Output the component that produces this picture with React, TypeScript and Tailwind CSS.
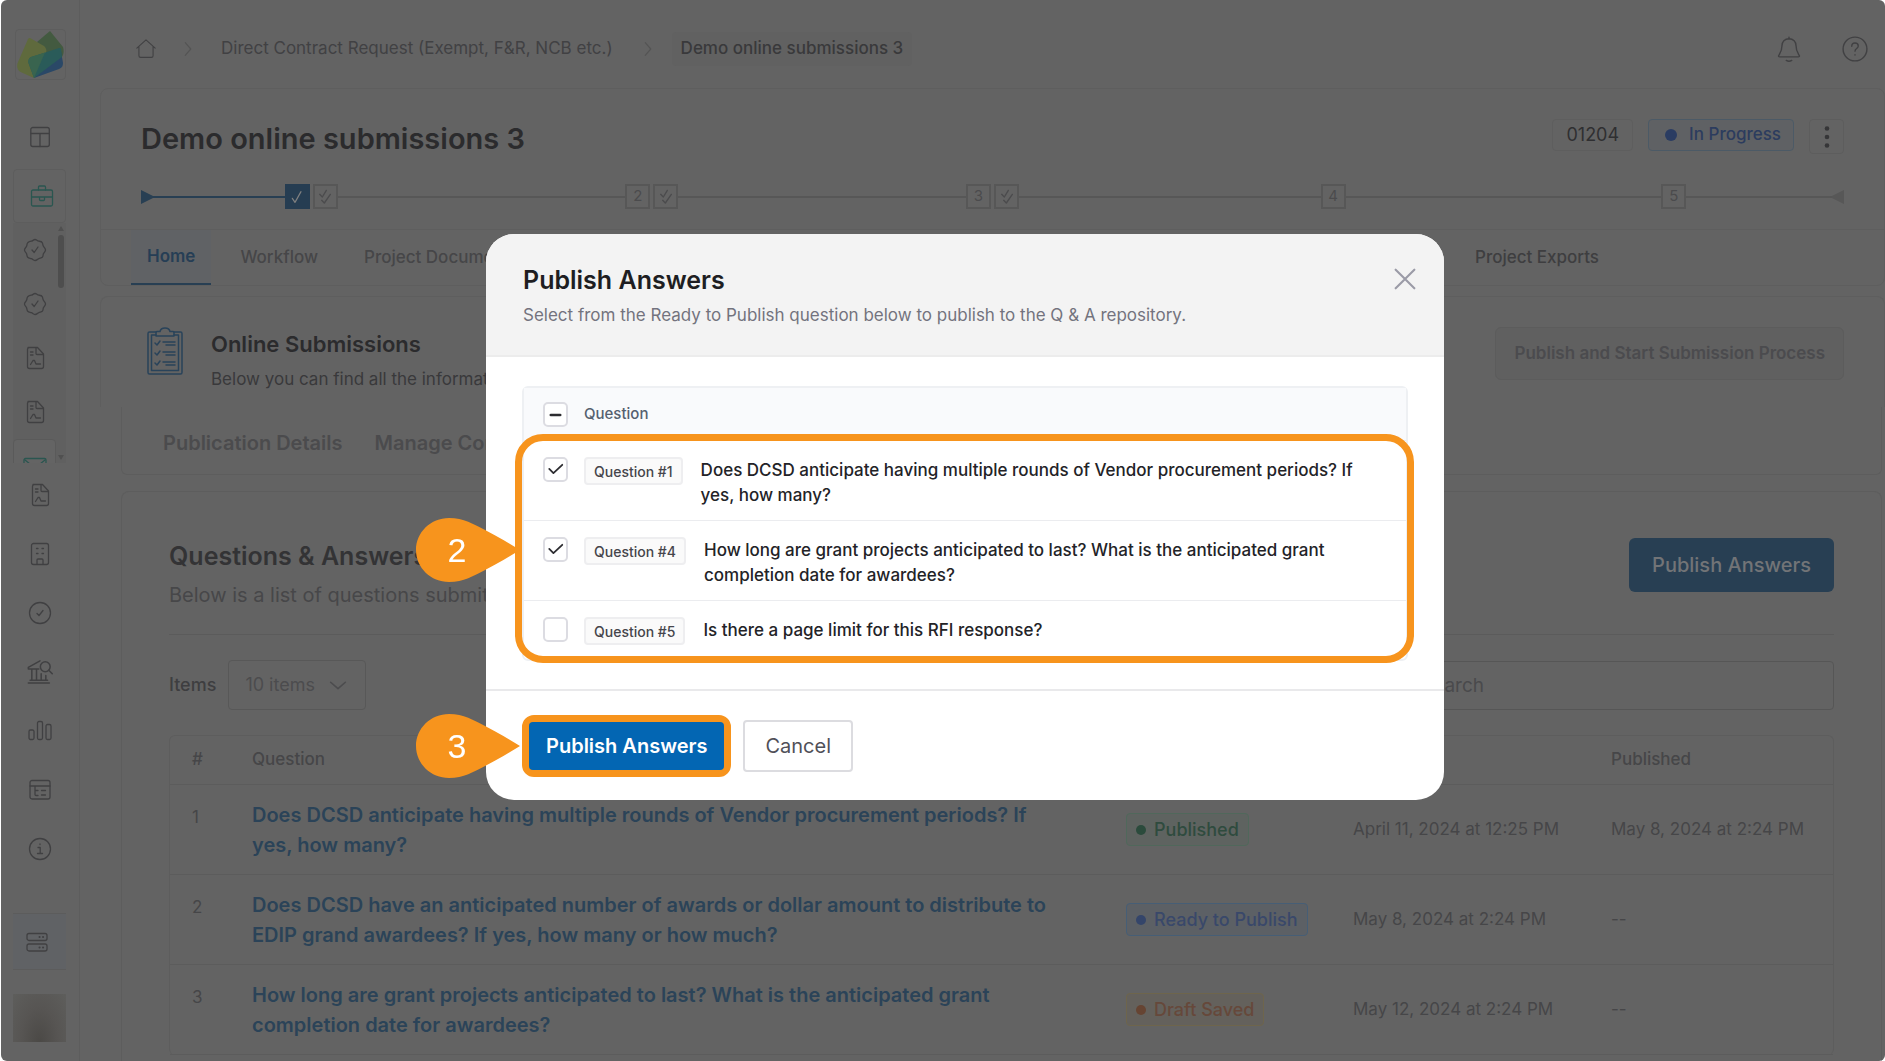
import type { ReactNode } from 'react';

const Glyph = ({ children, className = 'size-6' }: { children: ReactNode; className?: string }) => (
  <svg
    viewBox="0 0 24 24"
    className={`shrink-0 ${className}`}
    fill="none"
    stroke="currentColor"
    strokeWidth="1.3"
    strokeLinecap="round"
    strokeLinejoin="round"
    aria-hidden="true"
  >
    {children}
  </svg>
);

const LayoutIcon = () => (
  <Glyph>
    <rect x="2.800" y="2.500" width="18.500" height="19" rx="2" />
    <path d="M3 8.500h18M12 8.500v13" />
  </Glyph>
);

const BriefcaseIcon = () => (
  <Glyph>
    <rect x="1.500" y="6" width="21" height="16" rx="1.500" />
    <path d="M8.500 6V3a1 1 0 0 1 1-1h5a1 1 0 0 1 1 1v3M2 13h20M9.500 13v2.500a1 1 0 0 0 1 1h3a1 1 0 0 0 1-1V13" />
  </Glyph>
);

const BadgeIcon = () => (
  <Glyph>
    <path d="M12 1.500c1.500 0 2.200 1.500 3.700 1.700s3 .2 3.600 1.500.4 2.500 1.200 3.700 2 2 2 3.600-1.400 2.300-2 3.600-.2 2.800-1.200 3.700-2.500.7-3.700 1.400-2.100 1.800-3.600 1.800-2.300-1.300-3.600-1.800-2.700-.4-3.700-1.400-.6-2.500-1.200-3.700-2-2-2-3.600 1.300-2.400 2-3.600.2-2.800 1.200-3.700 2.200-1.300 3.600-1.500S10.500 1.500 12 1.500z" />
    <path d="m9 12 2.200 2.500L15 9" />
  </Glyph>
);

const DocIcon = () => (
  <Glyph>
    <path d="M5 1.500h9.500L20.500 8v12.500a2 2 0 0 1-2 2h-12a2 2 0 0 1-2-2v-17a2 2 0 0 1 2-2z" />
    <path d="M13 2v5.500a1 1 0 0 0 1 1h6M7.500 6H10M7.500 9H10M7.500 18.500l2.500-4h1.500l1.500 3.500h4.500" />
  </Glyph>
);

const BuildingIcon = () => (
  <Glyph>
    <rect x="3.500" y="1.500" width="17" height="21" rx="2" />
    <path d="M9 22v-4a1 1 0 0 1 1-1h4a1 1 0 0 1 1 1v4M8.500 6.500h1.500M14 6.500h1.500M8.500 11.500h1.500M14 11.500h1.500" />
  </Glyph>
);

const CheckCircleIcon = () => (
  <Glyph>
    <circle cx="12" cy="12" r="10.500" />
    <path d="m9 12.500 2 2 4-5" />
  </Glyph>
);

const BankIcon = () => (
  <Glyph className="size-7">
    <path d="M2 21.500h18M3.500 19h15M2 9.500h9M2 9.500V8l10-5.500M5 9.500V19M9 9.500V19M13 13.500V19M17 15v4" />
    <circle cx="16.500" cy="7.500" r="4.200" />
    <path d="m19.500 10.500 3 3" />
  </Glyph>
);

const ChartIcon = () => (
  <Glyph>
    <rect x="1" y="11" width="5" height="9.500" rx="1.500" />
    <rect x="9.500" y="2.500" width="5" height="18" rx="1.500" />
    <rect x="18" y="5.500" width="5" height="15" rx="1.500" />
  </Glyph>
);

const TableIcon = () => (
  <Glyph>
    <rect x="2" y="2.500" width="20" height="18.500" rx="2" />
    <path d="M2 8h20M7 8v8.500a1 1 0 0 0 1 1h2M7 12.500h3M13.500 12.500h4M13.500 17h4" />
  </Glyph>
);

const InfoIcon = () => (
  <Glyph>
    <circle cx="12" cy="12" r="10.500" />
    <path d="M10 10.500h2.200V16M9.500 16.500h5M12 7v.5" />
  </Glyph>
);

const ServerIcon = () => (
  <Glyph>
    <rect x="2" y="3.500" width="20" height="7" rx="2" />
    <rect x="2" y="14" width="20" height="7" rx="2" />
    <path d="M14.500 7h.1M18 7h.1M14.500 17.500h.1M18 17.500h.1" strokeWidth="2" />
  </Glyph>
);

const Logo = () => (
  <svg viewBox="0 0 47 47" className="size-[47px]" aria-hidden="true">
    <path d="M33 0 20 11l8 17 17-2c2-3 2-7 1-10z" fill="#435a40" />
    <path d="M13 7c-1 0-2 .5-2.400 2L.6 32c-1.200 4 0 7 3 9L17 47l12-25c1-3 0-5-2-7z" fill="#5f6a3d" />
    <path d="m44 20 2 12c0 3-1 5-4 6l-25 9z" fill="#2a4867" />
    <path d="M42 17c-9 3-18 6-28 9-2 1-3 3-2.500 6L17 47l28-21-1-8c0-1-1-1.300-2-1z" fill="#2a5b59" />
    <path d="M28 21.500 14 26c-2 1-3 3-2.500 6L17 47z" fill="#39644f" />
  </svg>
);

const ClipboardIcon = () => (
  <svg viewBox="0 0 36 48" className="h-12 w-9 shrink-0 text-[#29435a]" fill="none" stroke="currentColor" strokeWidth="1.500" strokeLinejoin="round" strokeLinecap="round" aria-hidden="true">
    <path d="M9 5H2.500a1.500 1.500 0 0 0-1.500 1.500v39A1.500 1.500 0 0 0 2.500 47h31a1.500 1.500 0 0 0 1.500-1.500v-39A1.500 1.500 0 0 0 33.500 5H27" />
    <path d="M9 8H4.500v35.500h27V8H27" />
    <path d="M9 9V5.500a1 1 0 0 1 1-1h3C13.500 2 15 1 18 1s4.500 1 5 3.500h3a1 1 0 0 1 1 1V9z" />
    <path d="m8 16 2 2 3-4M8 26l2 2 3-4M8 36l2 2 3-4M16 15h12M19 18h9M16 25h12M19 28h9M16 35h12M19 38h9" />
  </svg>
);

const scrollIcons = [BadgeIcon, BadgeIcon, DocIcon, DocIcon];
const navIcons = [
  { label: 'Documents', Icon: DocIcon },
  { label: 'Organization', Icon: BuildingIcon },
  { label: 'Approvals', Icon: CheckCircleIcon },
  { label: 'Audit', Icon: BankIcon },
  { label: 'Reports', Icon: ChartIcon },
  { label: 'Records', Icon: TableIcon },
  { label: 'Information', Icon: InfoIcon },
];

const Sidebar = () => (
  <nav aria-label="Main" className="flex w-[79px] shrink-0 flex-col border-r border-[#5d5d5d] pl-3 text-[#404042]">
    <div className="mt-[29px] ml-[2px] flex h-[51px] w-[51px] items-center justify-center rounded border border-[#5d5d5d]">
      <Logo />
    </div>
    <button aria-label="Dashboard" className="mt-[31px] flex h-[52px] w-[53px] items-center justify-center">
      <LayoutIcon />
    </button>
    <button aria-label="Projects" className="mt-[6px] flex h-[54px] w-[53px] items-center justify-center rounded border border-[#5d5d5d] pl-1 text-[#2a5650]">
      <BriefcaseIcon />
    </button>

    <div className="flex h-60 w-[53px] bg-[#606060]">
      <div className="flex w-[43px] flex-col overflow-hidden">
        {scrollIcons.map((Icon, i) => (
          <button key={i} aria-label={`Section ${i + 1}`} className="flex h-[54px] shrink-0 items-center justify-center">
            <Icon />
          </button>
        ))}
        <button aria-label="Submissions" className="flex h-[54px] shrink-0 items-start justify-center rounded border border-[#5a5a5a] bg-[#646464] pt-[17px] text-[#2a5650]">
          <Glyph>
            <rect x="1" y="1.500" width="22" height="17" rx="1.500" />
            <path d="m2 3 10 8 10-8" />
          </Glyph>
        </button>
      </div>
      <div className="flex flex-1 flex-col items-center py-[2px] text-[#505050]">
        <svg viewBox="0 0 8 6" className="h-[6px] w-2" fill="currentColor"><path d="M4 1l3 5H1z" /></svg>
        <div className="mt-1 h-[53px] w-[6px] rounded-full bg-[#4e4e4e]" />
        <svg viewBox="0 0 8 6" className="mt-auto h-[6px] w-2" fill="currentColor"><path d="M4 5L1 0h6z" /></svg>
      </div>
    </div>

    <div className="flex w-[53px] flex-col pt-[2px]">
      {navIcons.map(({ label, Icon }) => (
        <button key={label} aria-label={label} className="flex h-[59px] items-center justify-center">
          <Icon />
        </button>
      ))}
    </div>

    <button aria-label="Servers" className="mt-[35px] flex h-[57px] w-[53px] shrink-0 items-center justify-center border-y border-[#5c5c5c] bg-[#606265] pr-[6px]">
      <ServerIcon />
    </button>
    <div className="mt-6 h-12 w-[53px] shrink-0 bg-radial-[at_50%_100%] from-[#4b4946] via-[#575553] to-[#5e5e5c]" />
  </nav>
);

const Breadcrumbs = () => (
  <header className="flex h-[88px] shrink-0 items-center pt-[10px] pr-[17px] pl-14 text-[17px] text-[#414143]">
    <a href="#" aria-label="Home page">
      <Glyph className="size-5">
        <path d="M1 11 12 1l11 10M3.500 9v11a2 2 0 0 0 2 2h13a2 2 0 0 0 2-2V9" />
      </Glyph>
    </a>
    <Glyph className="mx-[21px] size-[22px] text-[#545454]"><path d="m9 5 6 7-6 7" /></Glyph>
    <a href="#" className="ml-px">Direct Contract Request (Exempt, F&amp;R, NCB etc.)</a>
    <Glyph className="ml-6 mr-[13px] size-[22px] text-[#545454]"><path d="m9 5 6 7-6 7" /></Glyph>
    <span className="rounded bg-[#616161] px-[9px] py-1 font-medium text-[#39393b]">Demo online submissions 3</span>
    <button aria-label="Notifications" className="ml-auto">
      <Glyph className="size-[26px]">
        <path d="M12 1v1.500M12 2.500c-4 0-6.500 3-6.500 6.500 0 5-1.500 6.500-3 9-.3.700 0 1.300.8 1.300h17.400c.8 0 1.100-.6.8-1.300-1.500-2.500-3-4-3-9 0-3.500-2.500-6.500-6.500-6.500zM9.500 22.500c1.500 1 3.500 1 5 0" />
      </Glyph>
    </button>
    <button aria-label="Help" className="ml-10">
      <Glyph className="size-[26px]">
        <circle cx="12" cy="12" r="11" />
        <path d="M9 9.500C9 7.500 10.300 6.500 12 6.500s3 1.100 3 2.700c0 2.300-3 2.300-3 4.800M12 17.300v.3" />
      </Glyph>
    </button>
  </header>
);

const steps = [
  { label: '1', done: true, review: true },
  { label: '2', done: false, review: true },
  { label: '3', done: false, review: true },
  { label: '4', done: false, review: false },
  { label: '5', done: false, review: false },
];

const ProgressSteps = () => (
  <ol className="mx-10 mt-[25px] grid h-[25px] grid-cols-5 text-[15px] text-[#4b4b4d]">
    {steps.map((step, i) => (
      <li key={step.label} className="flex items-center">
        {i === 0 && (
          <svg viewBox="0 0 14 14" className="-mr-[14px] h-[14px] w-[14px] shrink-0" fill="#283f53"><path d="M0 0l14 7-14 7z" /></svg>
        )}
        <span className={i === 0 ? 'h-[2px] flex-1 bg-[#283f53]' : 'h-[2px] flex-1 bg-[#575757]'} />
        {step.done ? (
          <span className="flex h-[25px] w-[25px] items-center justify-center bg-[#263d52] text-[#808080]">
            <Glyph className="size-4"><path d="m5 14 4 6L18 4" strokeWidth="1.800" /></Glyph>
          </span>
        ) : (
          <span className="flex h-[25px] w-[25px] items-center justify-center border-2 border-[#575757]">{step.label}</span>
        )}
        {step.review && (
          <span className="ml-[3px] flex h-[25px] w-[25px] items-center justify-center border-2 border-[#575757]">
            <Glyph className="size-4"><path d="m4 8 4 4 6-10M7 17l4 4 9-13" strokeWidth="2" /></Glyph>
          </span>
        )}
        <span className="h-[2px] flex-1 bg-[#575757]" />
        {i === steps.length - 1 && (
          <svg viewBox="0 0 14 14" className="-ml-[14px] h-[14px] w-[14px] shrink-0" fill="#575757"><path d="M14 0L0 7l14 7z" /></svg>
        )}
      </li>
    ))}
  </ol>
);

const ProjectCard = () => (
  <section className="rounded-lg border border-[#5e5e5e]">
    <div className="flex items-start gap-[15px] px-10 pt-[29px]">
      <h1 className="mr-auto text-[29px] leading-[41px] font-semibold text-[#2b2b2d]">Demo online submissions 3</h1>
      <span className="mt-px flex h-8 items-center rounded border border-[#5e5e5e] px-[13px] text-lg text-[#2f2f31]">01204</span>
      <span className="mt-px flex h-8 items-center gap-3 rounded border border-[#4c5a66] bg-[#5f6164] pr-3 pl-4 text-[17px] font-medium text-[#2c3c5e]">
        <span className="size-3 rounded-full bg-[#2a3c62]" />
        In Progress
      </span>
      <button aria-label="More actions" className="mt-px flex h-[35px] w-[35px] items-center justify-center rounded border border-[#5d5d5d] text-[#363638]">
        <svg viewBox="0 0 6 24" className="h-6 w-[6px]" fill="currentColor">
          <circle cx="3" cy="3.500" r="2.300" />
          <circle cx="3" cy="12" r="2.300" />
          <circle cx="3" cy="20.500" r="2.300" />
        </svg>
      </button>
    </div>
    <ProgressSteps />
    <div className="mt-5 flex h-14 gap-[14px] border-t border-[#5e5e5e] pr-[269px] pl-[30px] text-[17px] font-medium text-[#464648]">
      <a href="#" className="flex items-center border-b-2 border-[#283f53] bg-[#606265] px-4 font-semibold text-[#263e55]">Home</a>
      <a href="#" className="flex items-center px-[15px]">Workflow</a>
      <a href="#" className="flex items-center px-[17px]">Project Documents</a>
      <a href="#" className="ml-auto flex items-center px-4 text-[#3e3e40]">Project Exports</a>
    </div>
  </section>
);

const SubmissionsCard = () => (
  <section className="mt-[10px] flex h-[111px] rounded-t-lg border border-b-0 border-[#5e5e5e] px-10 pt-[30px]">
    <div className="pr-7 pl-[6px]">
      <ClipboardIcon />
    </div>
    <div className="flex-1">
      <h2 className="mt-px text-[22px] leading-8 font-semibold text-[#2b2b2d]">Online Submissions</h2>
      <p className="mt-1 text-[17px] leading-[30px] text-[#39393b]">Below you can find all the information about your online submissions.</p>
    </div>
    <button className="h-[53px] rounded-md border border-[#5c5c5c] bg-[#606060] px-[18px] text-[17px] font-semibold text-[#4b4b4e]">
      Publish and Start Submission Process
    </button>
  </section>
);

type Status = 'Published' | 'Ready to Publish' | 'Draft Saved';

const statusStyles: Record<Status, { pill: string; dot: string }> = {
  Published: { pill: 'border-[#50685b] bg-[#5e6360] text-[#2f4b3e]', dot: 'bg-[#2b4b3c]' },
  'Ready to Publish': { pill: 'border-[#465e76] bg-[#5c6065] text-[#39486a]', dot: 'bg-[#34456a]' },
  'Draft Saved': { pill: 'border-[#6e654c] bg-[#64615c] text-[#66483a]', dot: 'bg-[#664432]' },
};

const questions: { id: number; text: string; status: Status; asked: string; published: string }[] = [
  {
    id: 1,
    text: 'Does DCSD anticipate having multiple rounds of Vendor procurement periods? If yes, how many?',
    status: 'Published',
    asked: 'April 11, 2024 at 12:25 PM',
    published: 'May 8, 2024 at 2:24 PM',
  },
  {
    id: 2,
    text: 'Does DCSD have an anticipated number of awards or dollar amount to distribute to EDIP grand awardees? If yes, how many or how much?',
    status: 'Ready to Publish',
    asked: 'May 8, 2024 at 2:24 PM',
    published: '--',
  },
  {
    id: 3,
    text: 'How long are grant projects anticipated to last? What is the anticipated grant completion date for awardees?',
    status: 'Draft Saved',
    asked: 'May 12, 2024 at 2:24 PM',
    published: '--',
  },
];

const QuestionsTable = () => (
  <table className="mt-[25px] w-full table-fixed border-separate border-spacing-0 rounded-md border border-b-0 border-[#5d5d5d] text-left text-[#464648]">
    <colgroup>
      <col className="w-[82px]" />
      <col />
      <col className="w-[227px]" />
      <col className="w-[258px]" />
      <col className="w-[222px]" />
    </colgroup>
    <thead>
      <tr className="h-[49px] text-[17px]">
        <th className="border-b border-[#5c5c5c] pl-[22px] font-medium">#</th>
        <th className="border-b border-[#5c5c5c] font-medium">Question</th>
        <th className="border-b border-[#5c5c5c] font-medium">Status</th>
        <th className="border-b border-[#5c5c5c] font-medium">Submitted</th>
        <th className="border-b border-[#5c5c5c] font-medium">Published</th>
      </tr>
    </thead>
    <tbody>
      {questions.map((q) => (
        <tr key={q.id} className="text-[17px]">
          <td className="border-b border-[#5c5c5c] pt-5 pl-[22px] align-top">{q.id}</td>
          <td className="border-b border-[#5c5c5c] pt-[15px] pr-[60px] pb-[14px] align-top">
            <a href="#" className="block text-[20px] leading-[30px] font-semibold text-[#2b4358]">{q.text}</a>
          </td>
          <td className="border-b border-[#5c5c5c]">
            <span className={`inline-flex h-[33px] items-center gap-2 rounded border px-[9px] text-lg font-medium ${statusStyles[q.status].pill}`}>
              <span className={`size-[10px] rounded-full ${statusStyles[q.status].dot}`} />
              {q.status}
            </span>
          </td>
          <td className="border-b border-[#5c5c5c]">{q.asked}</td>
          <td className="border-b border-[#5c5c5c]">{q.published}</td>
        </tr>
      ))}
    </tbody>
  </table>
);

const QuestionsCard = () => (
  <section className="mt-4 mr-[3px] ml-[21px] flex-1 rounded-t-lg border border-b-0 border-[#5d5d5d] px-[47px] pt-[46px]">
    <div className="flex items-start justify-between border-b border-[#5b5b5b] pb-6">
      <div>
        <h2 className="text-[25px] leading-9 font-semibold text-[#333335]">Questions &amp; Answers</h2>
        <p className="mt-[6px] text-[20px] leading-[30px] text-[#474749]">Below is a list of questions submitted by vendors.</p>
      </div>
      <button className="h-[54px] rounded-md bg-[#283f53] px-[23px] text-xl font-medium text-[#727477]">Publish Answers</button>
    </div>
    <div className="mt-[25px] flex h-[50px] items-center text-lg">
      <label htmlFor="page-size" className="font-medium text-[#3e3e40]">Items</label>
      <div className="relative ml-3 h-full text-[#4c4c4e]">
        <select id="page-size" className="h-full w-[138px] appearance-none rounded-sm border border-[#585858] pl-4">
          <option>10 items</option>
          <option>25 items</option>
        </select>
        <Glyph className="pointer-events-none absolute top-[14px] right-[17px] size-[22px]"><path d="m4 9 8 7 8-7" strokeWidth="1.800" /></Glyph>
      </div>
      <input
        type="search"
        aria-label="Search questions"
        placeholder="Search"
        className="ml-auto h-[49px] w-[430px] rounded-sm border border-[#565656] px-4 text-[19px] placeholder:text-[#4a4a4c]"
      />
    </div>
    <QuestionsTable />
  </section>
);

const Pin = ({ label }: { label: string }) => (
  <svg viewBox="0 0 104 64" className="h-16 w-[104px]" aria-hidden="true">
    <path d="M33 0C14.800 0 0 14.300 0 32s14.800 32 33 32c15 0 24-6 37-12.500C82 45 93 39 104 32 93 25 82 19 70 12.500 57 6 48 0 33 0z" fill="#f7941d" />
    <text x="41" y="44" textAnchor="middle" fontSize="34" fontFamily="Liberation Sans, Arial, sans-serif" fill="#fff">{label}</text>
  </svg>
);

const publishable = [
  { tag: 'Question #1', checked: true, text: 'Does DCSD anticipate having multiple rounds of Vendor procurement periods? If yes, how many?' },
  { tag: 'Question #4', checked: true, text: 'How long are grant projects anticipated to last? What is the anticipated grant completion date for awardees?' },
  { tag: 'Question #5', checked: false, text: 'Is there a page limit for this RFI response?' },
];

const Checkbox = ({ id, checked, mixed }: { id: string; checked?: boolean; mixed?: boolean }) => (
  <span className="relative block size-[25px] shrink-0 text-[#2c2c30]">
    <input
      id={id}
      type="checkbox"
      defaultChecked={checked}
      className="peer block size-full appearance-none rounded-[5px] border-2 border-[#dcdce2] bg-white"
    />
    {mixed ? (
      <svg viewBox="0 0 24 24" className="pointer-events-none absolute inset-0" stroke="currentColor" strokeWidth="2.500" strokeLinecap="round"><path d="M7.500 12.500h9" /></svg>
    ) : (
      <svg viewBox="0 0 24 24" className="pointer-events-none absolute inset-0 hidden peer-checked:block" fill="none" stroke="currentColor" strokeWidth="1.700" strokeLinecap="round" strokeLinejoin="round"><path d="m6 11.500 4 4 8.500-8" /></svg>
    )}
  </span>
);

const PublishModal = () => (
  <div className="fixed inset-0 flex items-start justify-center pt-[234px] pl-[45px]">
    <div role="dialog" aria-labelledby="publish-title" className="w-[958px] rounded-[28px] bg-white text-[#232327]">
      <div className="flex items-start justify-between rounded-t-[28px] border-b-2 border-[#ececec] bg-[#f3f3f3] px-[37px] pt-7 pb-[25px]">
        <div>
          <h2 id="publish-title" className="text-[25px] leading-9 font-semibold text-[#1e1e22]">Publish Answers</h2>
          <p className="mt-[3px] mb-px text-[17px] leading-7 text-[#73737e]">
            Select from the Ready to Publish question below to publish to the Q &amp; A repository.
          </p>
        </div>
        <button aria-label="Close" className="-mr-3 mt-[3px] text-[#9b9ba7]">
          <Glyph className="size-7"><path d="m4 4 16 16M20 4 4 20" strokeWidth="1.800" /></Glyph>
        </button>
      </div>

      <div className="px-9 pt-[29px] pb-7">
        <div className="relative rounded-md border-2 border-[#eef0f3]">
          <div className="flex h-[52px] items-center gap-4 bg-[#f9fafc] pl-[19px]">
            <Checkbox id="question-all" mixed />
            <label htmlFor="question-all" className="text-[15px] font-medium text-[#55606f]">Question</label>
          </div>
          <ul>
            {publishable.map((q, i) => (
              <li key={q.tag} className="flex items-start border-t border-[#ebecef] pt-4 pr-8 pb-3 pl-[19px] last:pb-[14px]">
                <Checkbox id={`question-${i}`} checked={q.checked} />
                <span className="ml-4 flex h-7 shrink-0 items-center rounded border-2 border-[#eeeef0] bg-[#fafafa] px-2 text-[14px] font-medium text-[#45454b]">{q.tag}</span>
                <label htmlFor={`question-${i}`} className="ml-[18px] pt-px text-[17px] leading-[25px] font-medium">{q.text}</label>
              </li>
            ))}
          </ul>
          <div className="pointer-events-none absolute top-[46px] -right-2 -bottom-1 -left-[9px] rounded-[28px] border-[7px] border-[#f7941d]" />
          <div className="absolute top-[130px] -left-[108px]"><Pin label="2" /></div>
        </div>
      </div>

      <div className="flex items-center gap-3 border-t-2 border-[#e9e9eb] px-9 pt-6 pb-[23px]">
        <div className="relative rounded-xl border-[7px] border-[#f7941d] bg-[#f7941d]">
          <button className="block h-12 rounded bg-[#0366b3] px-[17px] text-[20px] font-semibold text-white">Publish Answers</button>
          <div className="absolute -top-2 -left-[113px]"><Pin label="3" /></div>
        </div>
        <button className="h-[52px] rounded border-2 border-[#dcdce0] bg-white px-5 text-[20px] text-[#505058]">Cancel</button>
      </div>
    </div>
  </div>
);

const App = () => {
  return (
    <div className="h-screen overflow-hidden bg-white pl-px font-['Inter','Noto_Sans',sans-serif]">
      <div className="flex h-full overflow-hidden rounded-md bg-[#636363]">
        <Sidebar />
        <main className="flex min-w-0 flex-1 flex-col">
          <Breadcrumbs />
          <div className="flex flex-1 flex-col pl-5">
            <ProjectCard />
            <SubmissionsCard />
            <nav aria-label="Submission" className="mr-[3px] ml-[21px] flex h-[68px] shrink-0 items-center gap-8 rounded-b-md border border-t-0 border-[#5d5d5d] pt-1 pl-[41px] text-[20px] font-semibold text-[#4b4b4d]">
              <a href="#">Publication Details</a>
              <a href="#">Manage Content</a>
            </nav>
            <QuestionsCard />
          </div>
        </main>
      </div>
      <PublishModal />
    </div>
  );
};

export default App;
